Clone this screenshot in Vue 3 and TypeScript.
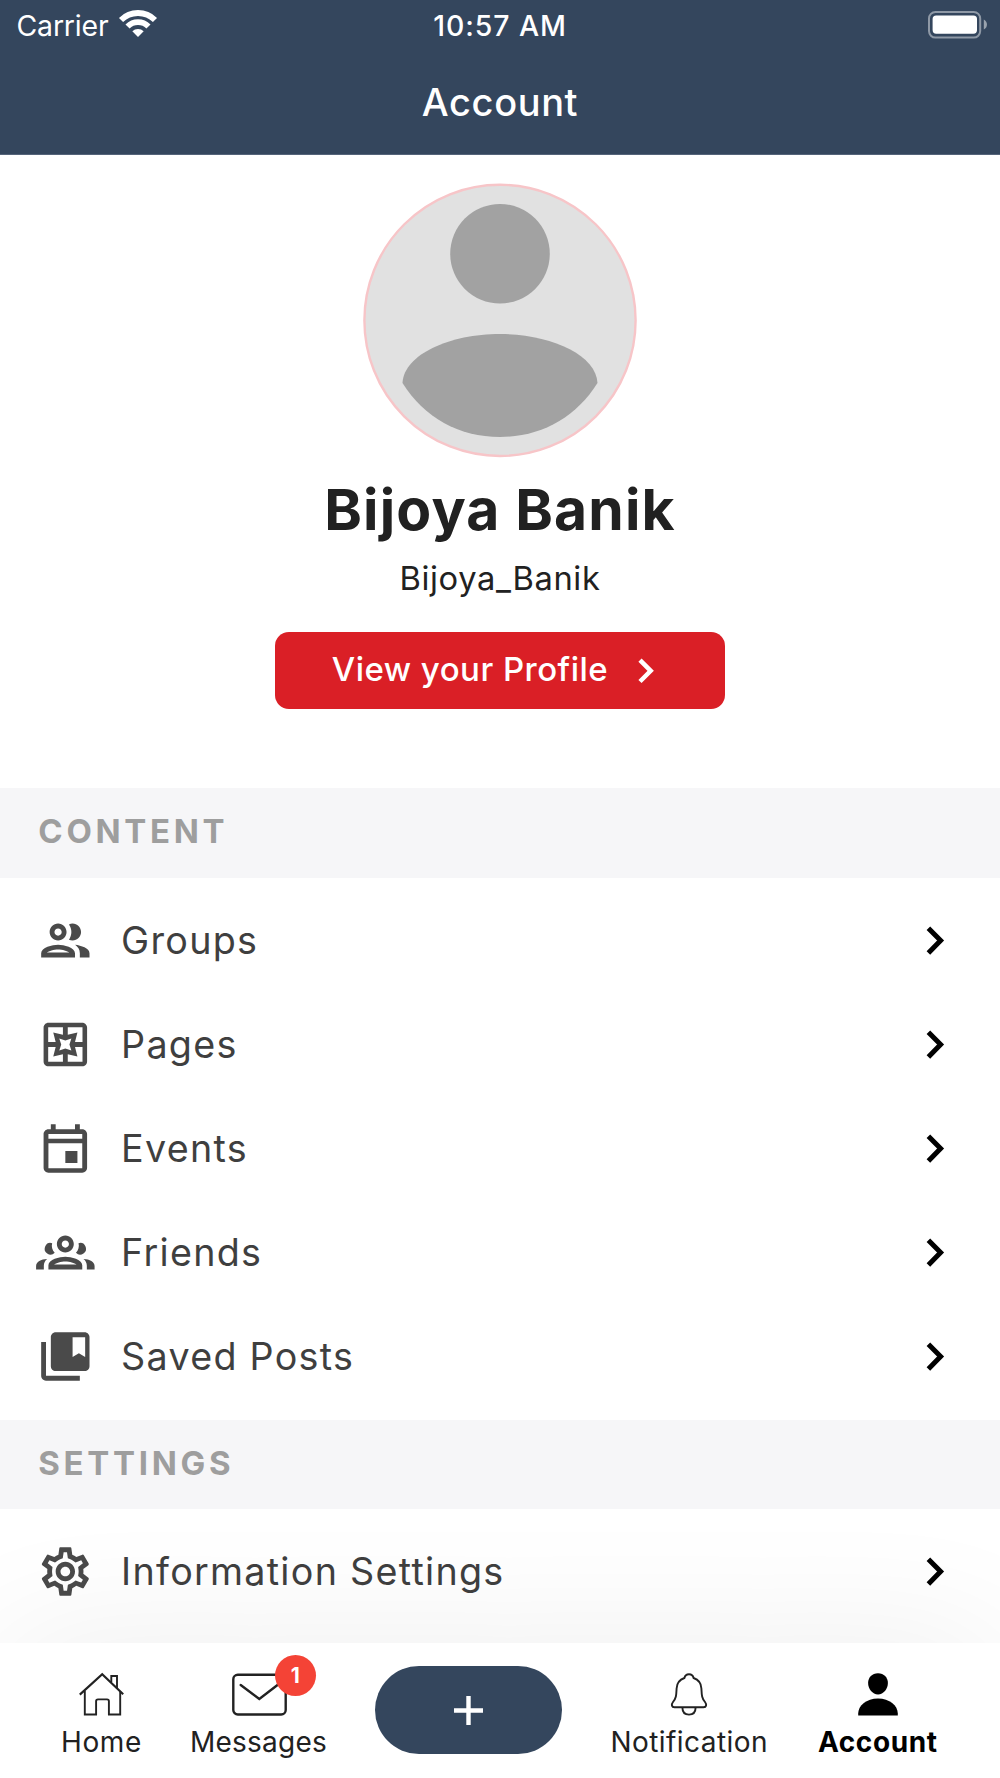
<script setup lang="ts">
interface MenuItem {
  label: string
  icon: string[]
}

interface MenuSection {
  title: string
  items: MenuItem[]
}

const sections: MenuSection[] = [
  {
    title: 'CONTENT',
    items: [
      {
        label: 'Groups',
        icon: [
          'M9 13.75c-2.34 0-7 1.17-7 3.5V19h14v-1.75c0-2.33-4.66-3.5-7-3.5zM4.34 17c.84-.58 2.87-1.25 4.66-1.25s3.82.67 4.66 1.25H4.34zM9 12c1.93 0 3.5-1.57 3.5-3.5S10.93 5 9 5 5.5 6.57 5.5 8.5 7.07 12 9 12zm0-5c.83 0 1.5.67 1.5 1.5S9.83 10 9 10s-1.5-.67-1.5-1.5S8.17 7 9 7z',
          'M16.04 13.81c1.16.84 1.96 1.96 1.96 3.44V19h4v-1.75c0-2.02-3.5-3.17-5.96-3.44zM15 12c1.93 0 3.5-1.57 3.5-3.5S16.93 5 15 5c-.54 0-1.04.13-1.5.35.63.89 1 1.98 1 3.15s-.37 2.26-1 3.15c.46.22.96.35 1.5.35z',
        ],
      },
      {
        label: 'Pages',
        icon: [
          'M5 3h14c1.1 0 2 .9 2 2v14c0 1.1-.9 2-2 2H5c-1.1 0-2-.9-2-2V5c0-1.1.9-2 2-2zM4.9 4.9V11H8L7 7l4 1V4.9zM19.1 4.9H13V8l4-1-1 4h3.1zM4.9 13v6.1H11V16l-4 1 1-4zM19.1 13H16l1 4-4-1v3.1h6.1zM9.5 9.5l.8 2.5-.8 2.5 2.5-.8 2.5.8-.8-2.5.8-2.5-2.5.8z',
        ],
      },
      {
        label: 'Events',
        icon: [
          'M19 4h-1V2h-2v2H8V2H6v2H5c-1.1 0-2 .9-2 2v14c0 1.1.9 2 2 2h14c1.1 0 2-.9 2-2V6c0-1.1-.9-2-2-2zm0 16.2H5V9.8h14v10.4zm0-12.2H5V6h14v2zm-7 5h5v5h-5v-5z',
        ],
      },
      {
        label: 'Friends',
        icon: [
          'M12 13.75c-2.34 0-7 1.17-7 3.5V19h14v-1.75c0-2.33-4.66-3.5-7-3.5zM7.34 17c.84-.58 2.87-1.25 4.66-1.25s3.82.67 4.66 1.25H7.34zM12 12c1.93 0 3.5-1.57 3.5-3.5S13.93 5 12 5 8.5 6.57 8.5 8.5 10.07 12 12 12zm0-5c.83 0 1.5.67 1.5 1.5S12.83 10 12 10s-1.5-.67-1.5-1.5S11.17 7 12 7z',
          'M6.55 8.15A2.4 2.4 0 1 0 7.6 12.1C6.6 11 6.15 9.6 6.55 8.15z',
          'M17.45 8.15A2.4 2.4 0 1 1 16.4 12.1C17.4 11 17.85 9.6 17.45 8.15z',
          'M-.1 19v-1.4c0-1.7 2-2.8 4.6-2.9-.9.7-1.4 1.6-1.4 2.8V19z',
          'M24.1 19v-1.4c0-1.7-2-2.8-4.6-2.9.9.7 1.4 1.6 1.4 2.8V19z',
        ],
      },
      {
        label: 'Saved Posts',
        icon: [
          'M4 6H2v14c0 1.1.9 2 2 2h14v-2H4V6z',
          'M20 2H8c-1.1 0-2 .9-2 2v12c0 1.1.9 2 2 2h12c1.1 0 2-.9 2-2V4c0-1.1-.9-2-2-2zm.2 10.2l-2.6-1.5L15 12.2V4h5.2v8.2z',
        ],
      },
    ],
  },
  {
    title: 'SETTINGS',
    items: [
      {
        label: 'Information Settings',
        icon: [
          'M19.43 12.98c.04-.32.07-.64.07-.98 0-.34-.03-.66-.07-.98l2.11-1.65c.19-.15.24-.42.12-.64l-2-3.46c-.09-.16-.26-.25-.44-.25-.06 0-.12.01-.17.03l-2.49 1c-.52-.4-1.08-.73-1.69-.98l-.38-2.65C14.46 2.18 14.25 2 14 2h-4c-.25 0-.46.18-.49.42l-.38 2.65c-.61.25-1.17.59-1.69.98l-2.49-1c-.06-.02-.12-.03-.18-.03-.17 0-.34.09-.43.25l-2 3.46c-.13.22-.07.49.12.64l2.11 1.65c-.04.32-.07.65-.07.98 0 .33.03.66.07.98l-2.11 1.65c-.19.15-.24.42-.12.64l2 3.46c.09.16.26.25.44.25.06 0 .12-.01.17-.03l2.49-1c.52.4 1.08.73 1.69.98l.38 2.65c.03.24.24.42.49.42h4c.25 0 .46-.18.49-.42l.38-2.65c.61-.25 1.17-.59 1.69-.98l2.49 1c.06.02.12.03.18.03.17 0 .34-.09.43-.25l2-3.46c.12-.22.07-.49-.12-.64l-2.11-1.65zm-1.98-1.71c.04.31.05.52.05.73 0 .21-.02.43-.05.73l-.14 1.13.89.7 1.08.84-.7 1.21-1.27-.51-1.04-.42-.9.68c-.43.32-.84.56-1.25.73l-1.06.43-.16 1.13-.2 1.35h-1.4l-.19-1.35-.16-1.13-1.06-.43c-.43-.18-.83-.41-1.23-.71l-.91-.7-1.06.43-1.27.51-.7-1.21 1.08-.84.89-.7-.14-1.13c-.03-.31-.05-.54-.05-.74s.02-.43.05-.73l.14-1.13-.89-.7-1.08-.84.7-1.21 1.27.51 1.04.42.9-.68c.43-.32.84-.56 1.25-.73l1.06-.43.16-1.13.2-1.35h1.39l.19 1.35.16 1.13 1.06.43c.43.18.83.41 1.23.71l.91.7 1.06-.43 1.27-.51.7 1.21-1.07.85-.89.7.14 1.13zM12 8c-2.21 0-4 1.79-4 4s1.79 4 4 4 4-1.79 4-4-1.79-4-4-4zm0 6c-1.1 0-2-.9-2-2s.9-2 2-2 2 .9 2 2-.9 2-2 2z',
        ],
      },
    ],
  },
]
</script>

<template>
  <div class="screen">
    <header class="topbar">
      <div class="status">
        <div class="status-left">
          <span class="carrier">Carrier</span>
          <svg class="wifi" width="38" height="27" viewBox="0 0 38 27" fill="none">
            <path d="M2.03 10.03A24 24 0 0 1 35.97 10.03" stroke="#fff" stroke-width="5.8" />
            <path d="M8.53 16.53A14.8 14.8 0 0 1 29.47 16.53" stroke="#fff" stroke-width="5.8" />
            <path d="M19 27L13.3 21.3A8.06 8.06 0 0 1 24.7 21.3Z" fill="#fff" />
          </svg>
        </div>
        <span class="time">10:57 AM</span>
        <div class="status-right">
          <svg width="60" height="28" viewBox="0 0 60 28" fill="none">
            <rect x="1" y="1" width="51.2" height="25.6" rx="6.5" stroke="#fff" stroke-opacity=".45" stroke-width="2" />
            <rect x="4.6" y="4.4" width="44.4" height="18.3" rx="3.6" fill="#fff" />
            <path d="M55.8 8.6C60 10.6 60 16.6 55.8 18.6Z" fill="#fff" fill-opacity=".5" />
          </svg>
        </div>
      </div>
      <h1 class="title">Account</h1>
    </header>

    <section class="profile">
      <svg class="avatar" width="274" height="274" viewBox="0 -0.4 274 274">
        <circle cx="137" cy="137" r="135.6" fill="#e1e1e1" stroke="#f7c5c8" stroke-width="2.4" />
        <circle cx="137" cy="70.3" r="49.8" fill="#a2a2a2" />
        <path d="M39.5 199.6C41 171 87 150.7 137 150.7S233 171 234.5 199.6C213 234 178 253.6 137 253.6S61 234 39.5 199.6Z" fill="#a2a2a2" />
      </svg>
      <h2 class="name">Bijoya Banik</h2>
      <p class="handle">Bijoya_Banik</p>
      <button class="view-profile" type="button">
        <span>View your Profile</span>
        <svg width="17" height="26" viewBox="0 0 17 26" fill="none">
          <path d="M2 2.1L12.7 12.8L2 23.5" stroke="#fff" stroke-width="4.5" />
        </svg>
      </button>
    </section>

    <section v-for="section in sections" :key="section.title">
      <h3 class="section-title">{{ section.title }}</h3>
      <ul class="menu">
        <li v-for="item in section.items" :key="item.label" class="row">
          <svg class="row-icon" viewBox="-0.14 -0.2 24 24" fill="#4a4a4a" fill-rule="evenodd">
            <path v-for="d in item.icon" :key="d" :d="d" />
          </svg>
          <span class="row-label">{{ item.label }}</span>
          <svg class="chevron" width="18" height="30" viewBox="-0.5 -0.6 18 30" fill="none">
            <path d="M1.9 2.6L14.1 15L1.9 27.4" stroke="#000" stroke-width="5" />
          </svg>
        </li>
      </ul>
    </section>

    <nav class="tabs">
      <a class="tab home">
        <svg width="45" height="43" viewBox="0 0 45 43" fill="none" stroke="#222" stroke-width="1.9">
          <path d="M.8 21.6L23.2 1.3L44.2 21.2" stroke-width="2.2" />
          <path d="M5.8 18V41.5H17.1V28.3Q17.1 26.4 19 26.4H28Q29.9 26.4 29.9 28.3V41.5H41.2V18.5" />
          <path d="M32.3 9V3H38V15" />
        </svg>
        <span>Home</span>
      </a>
      <a class="tab messages">
        <svg class="envelope" width="55" height="43" viewBox="0 0 55 43" fill="none" stroke="#222" stroke-width="2.4">
          <rect x="1.3" y="1.7" width="52.4" height="39.8" rx="4.5" />
          <path d="M8.7 12L27.3 26L45.5 12" stroke-linecap="round" />
        </svg>
        <span>Messages</span>
        <b class="badge">1</b>
      </a>
      <button class="add" type="button" aria-label="Add">
        <svg width="29" height="29" viewBox="0 0 29 29" fill="none">
          <path d="M14.5 0V29M0 14.5H29" stroke="#fff" stroke-width="4.4" />
        </svg>
      </button>
      <a class="tab notification">
        <svg width="36" height="43" viewBox="0 0 36 43" fill="none" stroke="#222" stroke-width="1.9">
          <path d="M13.4 5C14 2.2 15.5 1.2 18 1.2S22 2.2 22.6 5C27.5 6.7 30.2 10.5 30.4 15.5C30.7 22 30.7 25 34 29C36 31.6 35.3 34.3 32.5 34.3H3.5C.7 34.3 0 31.6 2 29C5.3 25 5.3 22 5.6 15.5C5.8 10.5 8.5 6.7 13.4 5Z" />
          <path d="M11.4 34.5C11.4 39 14 41.6 18 41.6S24.6 39 24.6 34.5" />
        </svg>
        <span>Notification</span>
      </a>
      <a class="tab account">
        <svg width="40" height="43" viewBox="0 0 40 43" fill="#000">
          <path d="M20 .2C26 .2 29.9 4.5 29.9 10C29.9 16 25.5 21.4 20 21.4S10.1 16 10.1 10C10.1 4.5 14 .2 20 .2Z" />
          <path d="M.2 42.5V40.5C.2 32.5 8.5 25.4 20 25.4S39.8 32.5 39.8 40.5V42.5Z" />
        </svg>
        <span>Account</span>
      </a>
    </nav>
  </div>
</template>

<style>
body {
  margin: 0;
  background: #fff;
}
</style>

<style scoped>
.screen {
  position: relative;
  width: 1000px;
  height: 1778px;
  overflow: hidden;
  background: #fff;
  font-family: Inter, 'Noto Sans', sans-serif;
  color: #212121;
}

h1,
h2,
h3,
p,
ul {
  margin: 0;
  padding: 0;
}

button {
  border: 0;
  padding: 0;
  font: inherit;
}

svg {
  display: block;
  flex: none;
  overflow: visible;
}

.topbar {
  height: 155px;
  background: #34465d;
  border-bottom: 1px solid #55647a;
  box-sizing: border-box;
  color: #fff;
}

.status {
  display: grid;
  grid-template-columns: 1fr auto 1fr;
  height: 52px;
  line-height: 52px;
  font-size: 28.4px;
}

.status-left {
  display: flex;
  padding-left: 16.5px;
}

.carrier {
  letter-spacing: -0.15px;
}

.wifi {
  margin: 10.4px 0 0 10.3px;
}

.time {
  font-weight: 500;
  letter-spacing: 0.94px;
}

.status-right {
  display: flex;
  justify-content: flex-end;
  padding: 10.5px 11.7px 0 0;
}

.title {
  height: 100px;
  line-height: 100px;
  text-align: center;
  font-size: 38px;
  font-weight: 500;
  letter-spacing: 0.6px;
}

.profile {
  display: flex;
  flex-direction: column;
  align-items: center;
  box-sizing: border-box;
  height: 633px;
  padding-top: 28.2px;
}

.name {
  margin-top: 17.4px;
  line-height: 70px;
  font-size: 57px;
  font-weight: 700;
  letter-spacing: 1.15px;
}

.handle {
  margin-top: 13px;
  line-height: 40px;
  font-size: 32.7px;
  letter-spacing: 0.6px;
}

.view-profile {
  display: flex;
  align-items: center;
  box-sizing: border-box;
  width: 450px;
  height: 77.5px;
  margin-top: 34.3px;
  padding-left: 56.8px;
  border-radius: 14px;
  background: #da1f26;
  color: #fff;
}

.view-profile span {
  width: 306px;
  padding-bottom: 4px;
  text-align: left;
  font-size: 33px;
  font-weight: 500;
  letter-spacing: 0.47px;
  line-height: 40px;
}

.section-title {
  height: 89.5px;
  padding-left: 38.3px;
  background: #f6f6f8;
  color: #9e9e9e;
  line-height: 87.4px;
  font-size: 33px;
  font-weight: 700;
  letter-spacing: 3.68px;
}

.menu {
  padding: 10.2px 0 12px;
  list-style: none;
}

.row {
  display: flex;
  align-items: center;
  height: 104px;
  padding: 0 55.7px 0 36px;
}

.row-icon {
  width: 58px;
  height: 58px;
}

.row-label {
  flex: 1;
  margin-left: 27.1px;
  color: #3f3f3f;
  font-size: 37.7px;
  letter-spacing: 1.27px;
  line-height: 50px;
}

.tabs {
  position: absolute;
  left: 0;
  right: 0;
  bottom: 0;
  display: flex;
  align-items: flex-start;
  gap: 48px;
  box-sizing: border-box;
  height: 135px;
  padding-left: 61px;
  background: #fff;
  box-shadow: 0 0 145px rgba(0, 0, 0, 0.07);
}

.tab {
  position: relative;
  display: flex;
  flex-direction: column;
  align-items: center;
  padding-top: 29.5px;
  font-size: 28px;
  white-space: nowrap;
}

.tab span {
  margin-top: 9.5px;
  line-height: 34px;
}

.home {
  width: 81px;
  letter-spacing: 0.6px;
}

.messages {
  width: 137px;
  letter-spacing: 0.25px;
}

.envelope {
  margin-left: 1.5px;
}

.notification {
  width: 158.5px;
  letter-spacing: 0.45px;
}

.account {
  width: 122.5px;
  color: #000;
  font-weight: 700;
  letter-spacing: 0.6px;
}

.badge {
  position: absolute;
  top: 11.5px;
  left: 84.6px;
  width: 41.4px;
  height: 41.4px;
  border-radius: 50%;
  background: #f44336;
  color: #fff;
  text-align: center;
  line-height: 42px;
  font-size: 21px;
  font-weight: 700;
  letter-spacing: 0;
}

.add {
  display: flex;
  align-items: center;
  justify-content: center;
  width: 187px;
  height: 88px;
  margin-top: 23.3px;
  border-radius: 44px;
  background: #34465d;
}
</style>
